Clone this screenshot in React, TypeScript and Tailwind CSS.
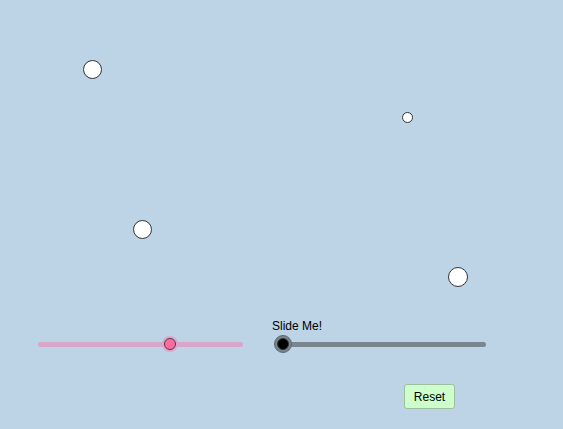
import React from "react";

const circles = [
  { x: 92.5, y: 69, d: 19 },
  { x: 407.5, y: 117, d: 11 },
  { x: 142.8, y: 229.5, d: 19 },
  { x: 458, y: 277, d: 19.5 },
];

export default function App() {
  return (
    <div className="relative w-[563px] h-[429px] overflow-hidden bg-[#bdd3e6] font-['Liberation_Sans',Arial,sans-serif]">
      {circles.map((c, i) => (
        <div
          key={i}
          className="absolute rounded-full bg-white border border-[#333]"
          style={{ left: c.x - c.d / 2, top: c.y - c.d / 2, width: c.d, height: c.d }}
        />
      ))}
      <div className="flex flex-col pt-[319px]">
        <div className="flex items-start">
          <div className="ml-[38px] w-[205px] flex flex-col">
            <div className="h-[16px]" />
            <div className="relative h-[18px] flex items-center">
              <div className="w-full h-[5px] rounded-full bg-[#d8a6c8]" />
              <div className="absolute left-[124px] top-[1px] w-[16px] h-[16px] rounded-full bg-[#dba5c9] flex items-center justify-center">
                <div className="w-[12px] h-[12px] rounded-full bg-[#ff6b9e] border border-[#444]" />
              </div>
            </div>
          </div>
          <div className="ml-[29px] w-[214px] flex flex-col">
            <div className="h-[16px] text-[12px] leading-[14px] text-black">Slide Me!</div>
            <div className="relative h-[18px] flex items-center">
              <div className="ml-[8px] w-[206px] h-[5px] rounded-full bg-[#7a868e]" />
              <div className="absolute left-[2px] top-[0px] w-[18px] h-[18px] rounded-full bg-[#78858e] border border-[#5d676e] flex items-center justify-center">
                <div className="w-[12px] h-[12px] rounded-full bg-black border border-[#333]" />
              </div>
            </div>
          </div>
        </div>
        <div className="mt-[31px] ml-[404px]">
          <button className="w-[51px] h-[25px] rounded-[3px] bg-[#ccffcc] border border-[#9ebf9e] text-[12px] text-black flex items-center justify-center">
            Reset
          </button>
        </div>
      </div>
    </div>
  );
}
